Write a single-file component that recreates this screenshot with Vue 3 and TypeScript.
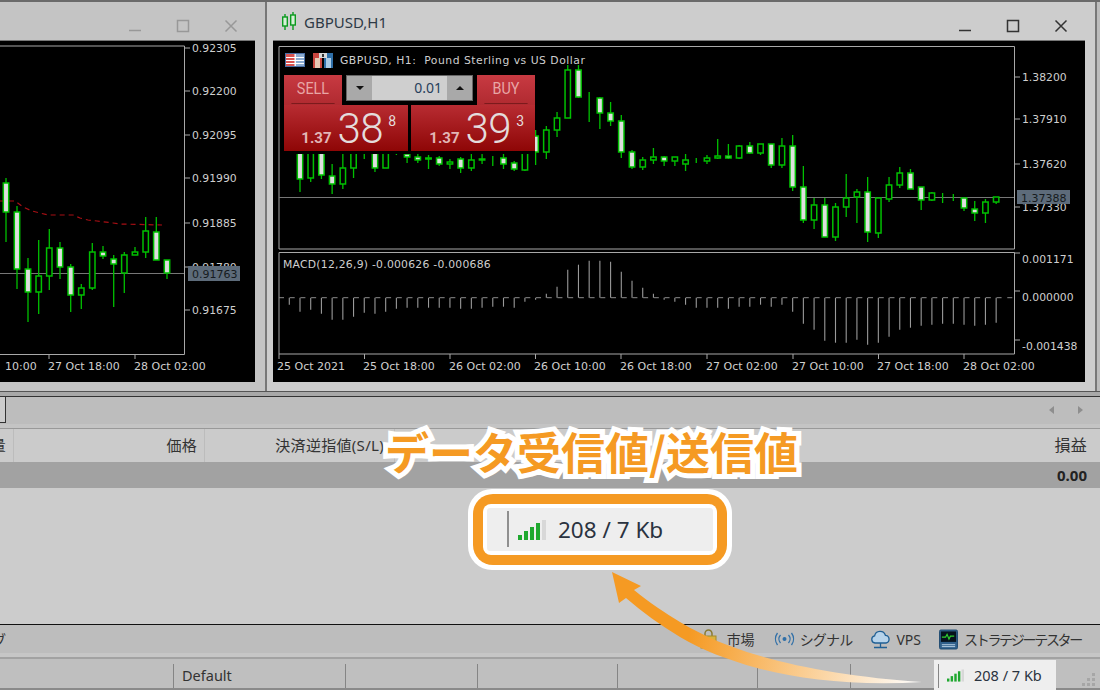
<script setup lang="ts">
// [index, wickTop, wickBottom, bodyTop, bodyBottom, filled]
type Candle = [number, number, number, number, number, number]

const STEP = 10.71

const gbpCandles: Candle[] = [
  [0, 140, 192, 140, 179, 1], [1, 140, 182, 140, 178, 0], [2, 140, 179, 140, 175, 1], [3, 164, 194, 176, 184, 1],
  [4, 154, 189, 168, 184, 0], [5, 140, 178, 140, 168, 0], [6, 154, 159, 158, 158, 0], [7, 140, 172, 140, 168, 1],
  [8, 140, 168, 140, 168, 0], [9, 154, 155, 155, 155, 0], [10, 150, 163, 154, 157, 1], [11, 154, 163, 157, 160, 1],
  [12, 155, 169, 158, 159, 0], [13, 156, 166, 158, 164, 1], [14, 159, 169, 162, 164, 0], [15, 157, 173, 159, 168, 1],
  [16, 154, 171, 160, 168, 0], [17, 154, 164, 159, 160, 0], [18, 156, 166, 158, 158, 0], [19, 150, 169, 158, 164, 1],
  [20, 161, 171, 163, 169, 1], [21, 150, 171, 150, 170, 0], [22, 130, 165, 136, 152, 1], [23, 126, 159, 130, 152, 0],
  [24, 112, 137, 118, 130, 0], [25, 65, 118, 70, 118, 0], [26, 65, 98, 70, 97, 1], [27, 92, 122, 97, 97, 0],
  [28, 97, 129, 98, 113, 1], [29, 102, 126, 113, 121, 1], [30, 115, 158, 121, 152, 1], [31, 150, 169, 152, 167, 1],
  [32, 157, 170, 160, 167, 0], [33, 148, 164, 157, 160, 0], [34, 156, 166, 157, 161, 1], [35, 157, 166, 157, 161, 0],
  [36, 154, 171, 160, 164, 0], [37, 158, 163, 161, 161, 0], [38, 155, 164, 158, 161, 0], [39, 139, 159, 156, 158, 0],
  [40, 144, 159, 156, 158, 1], [41, 145, 159, 146, 158, 0], [42, 142, 154, 146, 153, 1], [43, 144, 155, 144, 153, 0],
  [44, 144, 168, 144, 165, 1], [45, 138, 168, 146, 165, 0], [46, 135, 191, 146, 187, 1], [47, 166, 223, 187, 220, 1],
  [48, 198, 229, 205, 220, 0], [49, 198, 237, 205, 237, 1], [50, 203, 241, 207, 237, 0], [51, 174, 217, 198, 207, 0],
  [52, 189, 223, 192, 197, 0], [53, 177, 242, 192, 232, 1], [54, 198, 238, 198, 233, 0], [55, 177, 202, 185, 199, 0],
  [56, 167, 188, 173, 185, 0], [57, 169, 189, 173, 189, 1], [58, 187, 210, 187, 200, 1], [59, 192, 201, 193, 200, 0],
  [60, 193, 203, 197, 197, 0], [61, 194, 201, 198, 198, 0], [62, 198, 211, 198, 208, 1], [63, 201, 221, 209, 213, 1],
  [64, 199, 223, 202, 213, 0], [65, 197, 204, 197, 202, 0],
]

// left chart: [x, wickTop, wickBottom, bodyTop, bodyBottom, filled]
const leftCandles: Candle[] = [
  [6, 178, 242, 183, 212, 1], [17, 206, 289, 212, 269, 1], [28, 258, 322, 269, 292, 1], [38.7, 240, 314, 276, 292, 0],
  [49.3, 229, 290, 248, 276, 0], [60, 242, 279, 248, 267, 1], [70.7, 264, 312, 267, 295, 1], [81.3, 284, 309, 288, 295, 0],
  [92.3, 243, 290, 252, 288, 0], [103, 246, 259, 252, 256, 1], [113.7, 255, 307, 259, 264, 1], [124.3, 252, 293, 255, 273, 0],
  [135, 247, 255, 252, 255, 0], [145.7, 217, 258, 231, 252, 0], [156.3, 217, 260, 232, 260, 1], [167, 260, 279, 260, 273, 1],
]

// bar length from the zero line, starting at index -1 (negative goes up)
const macd = [
  7, 14, 12, 16, 22, 22, 19, 15, 16, 14, 11, 10, 10, 10, 10, 10, 11, 11, 10, 9, 9, 10, 4, 2, -4, -11, -28, -33, -37, -37, -36,
  -26, -17, -10, -4, 2, 4, 7, 10, 10, 10, 11, 9, 9, 7, 9, 7, 14, 26, 32, 43, 45, 45, 42, 47, 45, 39, 32, 30, 28, 27, 26, 26,
  27, 28, 27, 25,
]

const candleX = (i: number) => 301 + STEP * i
const macdBars = macd.map((d, i) => ({ x: candleX(i - 1), d }))

const redLine = '0,201 15,201 23,207 32,211 40,213 48,215 73,215 80,218 88,220 97,221 113,223 120,224 162,225'

const leftPrices = [
  { y: 48, t: '0.92305' }, { y: 91, t: '0.92200' }, { y: 135, t: '0.92095' }, { y: 178, t: '0.91990' },
  { y: 223, t: '0.91885' }, { y: 267, t: '0.91780' }, { y: 310, t: '0.91675' },
]
const gbpPrices = [
  { y: 77, t: '1.38200' }, { y: 119, t: '1.37910' }, { y: 164, t: '1.37620' }, { y: 207, t: '1.37330' },
]
const macdPrices = [
  { y: 259, t: '0.001171' }, { y: 297, t: '0.000000' }, { y: 346, t: '-0.001438' },
]
const gbpTimes = [
  { x: 278, tick: 280, t: '25 Oct 2021' }, { x: 364, tick: 365.5, t: '25 Oct 18:00' }, { x: 450, tick: 451, t: '26 Oct 02:00' },
  { x: 535, tick: 536.5, t: '26 Oct 10:00' }, { x: 621, tick: 622, t: '26 Oct 18:00' }, { x: 707, tick: 708, t: '27 Oct 02:00' },
  { x: 793, tick: 794, t: '27 Oct 10:00' }, { x: 878, tick: 879.5, t: '27 Oct 18:00' }, { x: 964, tick: 965, t: '28 Oct 02:00' },
]

const signalBars = [
  { x: 0, h: 5, on: true }, { x: 6, h: 9, on: true }, { x: 12, h: 13, on: true }, { x: 18, h: 17, on: true }, { x: 24, h: 20, on: false },
]
const statusCells = [173, 172, 132, 140, 140, 93, 84]
const gripDots = [[10, 0], [5, 5], [10, 5], [0, 10], [5, 10], [10, 10]]
</script>

<template>
  <div class="screen">
    <div class="desktop">
      <section class="win win-left">
        <header class="titlebar">
          <div class="win-btns">
            <svg width="14" height="14" viewBox="0 0 14 14"><path d="M1 11.5h12" /></svg>
            <svg width="14" height="14" viewBox="0 0 14 14"><path d="M1.5 1.5h11v11h-11z" /></svg>
            <svg width="14" height="14" viewBox="0 0 14 14"><path d="M1.5 1.5l11 11M12.5 1.5l-11 11" /></svg>
          </div>
        </header>
        <div class="pane">
          <svg width="255" height="341" viewBox="0 41 255 341" class="chart">
            <path class="axis" d="M0 46H184.5V354.5H0" />
            <g v-for="p in leftPrices" :key="p.t">
              <path class="axis" :d="`M184 ${p.y}h6`" />
              <text class="lbl" x="192" :y="p.y + 4">{{ p.t }}</text>
            </g>
            <polyline class="red" :points="redLine" />
            <path class="cur" d="M0 273.5H184" />
            <g v-for="c in leftCandles" :key="c[0]">
              <path class="wick" :d="`M${c[0]} ${c[1]}V${c[2]}`" />
              <rect class="body" :class="{ filled: c[5] }" :x="c[0] - 2.7" :y="c[3]" width="5.4" :height="c[4] - c[3]" />
            </g>
            <rect x="188" y="266" width="52" height="15" class="cur-box" />
            <text class="cur-txt" x="192" y="278">0.91763</text>
            <path class="axis" d="M49 354v5M135 354v5" />
            <text class="lbl time" x="5" y="370">10:00</text>
            <text class="lbl time" x="48" y="370">27 Oct 18:00</text>
            <text class="lbl time" x="134" y="370">28 Oct 02:00</text>
          </svg>
        </div>
      </section>

      <section class="win win-right">
        <header class="titlebar">
          <svg class="app-icon" width="16" height="20" viewBox="0 0 16 20">
            <path d="M4 2v16M12 0v18" />
            <rect x="1.7" y="5" width="4.6" height="9" />
            <rect x="9.7" y="3" width="4.6" height="10" />
          </svg>
          <span class="win-title">GBPUSD,H1</span>
          <div class="win-btns">
            <svg width="14" height="14" viewBox="0 0 14 14"><path d="M1 11.5h12" /></svg>
            <svg width="14" height="14" viewBox="0 0 14 14"><path d="M1.5 1.5h11v11h-11z" /></svg>
            <svg width="14" height="14" viewBox="0 0 14 14"><path d="M1.5 1.5l11 11M12.5 1.5l-11 11" /></svg>
          </div>
        </header>
        <div class="pane">
          <svg width="812" height="341" viewBox="274 41 812 341" class="chart">
            <path class="axis" d="M280 46.5H1015.5V249H280zM280 252.5H1015.5V354H280z" />
            <g v-for="p in gbpPrices" :key="p.t">
              <path class="axis" :d="`M1015 ${p.y}h6`" />
              <text class="lbl" x="1023" :y="p.y + 4">{{ p.t }}</text>
            </g>
            <g v-for="p in macdPrices" :key="p.t">
              <path class="axis" :d="`M1015 ${p.y - 6}h6`" />
              <text class="lbl" x="1023" :y="p.y + 4">{{ p.t }}</text>
            </g>
            <path class="cur" d="M280 197.5H1015" />
            <g v-for="c in gbpCandles" :key="c[0]">
              <path class="wick" :d="`M${candleX(c[0])} ${c[1]}V${c[2]}`" />
              <rect class="body" :class="{ filled: c[5] }" :x="candleX(c[0]) - 2.7" :y="c[3]" width="5.4" :height="c[4] - c[3]" />
            </g>
            <rect x="1018" y="190" width="53" height="14" class="cur-box" />
            <text class="cur-txt" x="1022" y="202">1.37388</text>

            <text class="lbl sym" x="341" y="64">GBPUSD, H1:&#160;&#160;Pound Sterling vs US Dollar</text>
            <text class="lbl macd-lbl" x="284" y="268">MACD(12,26,9) -0.000626 -0.000686</text>
            <path class="zero" d="M280 297.7H1015" />
            <path v-for="b in macdBars" :key="b.x" class="macd" :d="`M${b.x} 297.7v${b.d}`" />
            <g v-for="t in gbpTimes" :key="t.t">
              <path class="axis" :d="`M${t.tick} 354v5`" />
              <text class="lbl time" :x="t.x" y="370">{{ t.t }}</text>
            </g>
          </svg>

          <div class="chart-icons">
            <svg width="20" height="14" viewBox="0 0 20 14">
              <rect x=".5" y=".5" width="19" height="13" fill="#e8e8f0" stroke="#4a6fa5" />
              <path d="M1 1h9v12H1z" fill="#d9534f" />
              <path d="M11 1h8v12h-8z" fill="#3f78b5" opacity=".55" />
              <path d="M1 4.500h18M1 7.500h18M1 10.500h18M10 1v12" stroke="#fff" fill="none" />
            </svg>
            <svg width="20" height="15" viewBox="0 0 20 15">
              <path d="M0 0h9v15H0z" fill="#c9463f" />
              <path d="M2 5h5v10H2z" fill="#e6c8b4" />
              <path d="M11 0h9v15h-9z" fill="#2f6fa8" />
              <path d="M13 5h5v10h-5z" fill="#a9cbe6" />
              <path d="M6 0h8v5H6z" fill="#d8d8d8" />
              <path d="M9 1h2v3H9z" fill="#333" />
            </svg>
          </div>

          <div class="trade">
            <div class="trade-top">
              <div class="side-btn"><span>SELL</span></div>
              <div class="vol">
                <div class="vol-btn"><i class="tri down" /></div>
                <div class="vol-val">0.01</div>
                <div class="vol-btn"><i class="tri up" /></div>
              </div>
              <div class="side-btn"><span>BUY</span></div>
            </div>
            <div class="trade-prices">
              <div class="price sell-price">
                <span class="p-small">1.37</span><span class="p-big">38</span><span class="p-sup">8</span>
              </div>
              <div class="price">
                <span class="p-small">1.37</span><span class="p-big">39</span><span class="p-sup">3</span>
              </div>
            </div>
          </div>
        </div>
      </section>
    </div>

    <div class="terminal">
      <div class="tabs-row">
        <div class="tab-stub" />
        <div class="tab-arrows">
          <i class="arr arr-l" />
          <i class="arr arr-r" />
        </div>
      </div>
      <div class="band" />
      <div class="thead">
        <div class="th th-a"><span>数量</span></div>
        <div class="th th-b">価格</div>
        <div class="th th-c">決済逆指値(S/L)</div>
        <div class="th th-d">損益</div>
      </div>
      <div class="total-row">0.00</div>
      <div class="t-body" />
      <div class="toolbar">
        <span class="tb-cut">ブ</span>
        <div class="tb-items">
          <span class="tb-item">
            <svg width="17" height="20" viewBox="0 0 17 20">
              <path d="M5 8V4.500a3.500 3.500 0 017 0V8" fill="none" stroke="#8a7a30" stroke-width="1.500" />
              <rect x="1" y="7" width="15" height="12" fill="#d9b23c" stroke="#a68a2a" />
            </svg>
            市場
          </span>
          <span class="tb-item tb-signal">
            <svg width="21" height="14" viewBox="0 0 21 14" fill="none" stroke="#2f6fa8" stroke-width="1.3">
              <circle cx="10.5" cy="7" r="2" fill="#2f6fa8" stroke="none" />
              <path d="M6.5 3a6 6 0 000 8M14.5 3a6 6 0 010 8M3.5 1a10 10 0 000 12M17.5 1a10 10 0 010 12" />
            </svg>
            シグナル
          </span>
          <span class="tb-item tb-vps">
            <svg width="21" height="21" viewBox="0 0 21 21" fill="#b7d3ea" stroke="#1f5f94" stroke-width="1.3">
              <path d="M5 14a3.6 3.6 0 01-.4-7.1 5.6 5.6 0 0110.8-.6A3.9 3.9 0 0116 14z" />
              <path d="M10.5 14v4M4 18.500h13" fill="none" />
            </svg>
            VPS
          </span>
          <span class="tb-item tb-tester">
            <svg width="19" height="21" viewBox="0 0 20 21">
              <rect x=".5" y=".5" width="19" height="20" rx="1.500" fill="#2f5f8a" stroke="#1f4a70" />
              <rect x="2" y="2" width="16" height="11" fill="#06121c" />
              <path d="M3 8h4l1.500-3 2 5 1.500-3h4" fill="none" stroke="#2fd02f" stroke-width="1.200" />
              <path d="M3 16h14M3 18h14" stroke="#bcd3e6" />
            </svg>
            ストラテジーテスター
          </span>
        </div>
      </div>
      <div class="light-band" />
      <div class="status">
        <div v-for="(w, i) in statusCells" :key="i" class="cell" :style="{ width: w + 'px' }">
          <div class="cell-in" :class="{ 'no-sep': i === 0 }">
            <span v-if="i === 1">Default</span>
          </div>
        </div>
        <div class="cell cell-hl">
          <div class="cell-in">
            <svg class="sig" width="17" height="13" viewBox="0 0 28 20">
              <rect v-for="b in signalBars" :key="b.x" :x="b.x" :y="20 - b.h" width="4" :height="b.h" :fill="b.on ? '#1fa82f' : '#d8d8d8'" />
            </svg>
            <span>208 / 7 Kb</span>
          </div>
        </div>
        <div class="cell cell-end">
          <svg width="15" height="15" viewBox="0 0 15 15">
            <rect v-for="d in gripDots" :key="d.join()" :x="d[0]" :y="d[1]" width="3" height="3" fill="#a6a6a6" />
          </svg>
        </div>
      </div>
    </div>

    <!-- annotation layer -->
    <div class="big-label">データ受信値/送信値</div>
    <div class="callout">
      <div class="callout-orange">
        <div class="callout-white">
          <div class="callout-in">
            <svg class="callout-sig" width="28" height="20" viewBox="0 0 28 20">
              <rect v-for="b in signalBars" :key="b.x" :x="b.x" :y="20 - b.h" width="4" :height="b.h" :fill="b.on ? '#1fa82f' : '#d8d8d8'" />
            </svg>
            <span>208 / 7 Kb</span>
          </div>
        </div>
      </div>
    </div>
    <svg class="arrow" width="1100" height="690" viewBox="0 0 1100 690">
      <defs>
        <linearGradient id="arrow-fade" gradientUnits="userSpaceOnUse" x1="690" y1="630" x2="922" y2="682">
          <stop offset="0" stop-color="#f59a23" />
          <stop offset="1" stop-color="#ffffff" />
        </linearGradient>
      </defs>
      <path
        fill="url(#arrow-fade)"
        d="M612 572L641 586 634 590C650 603 665 613 680 622 705 637 730 647 757 655 800 668 860 678 922 682 860 686 800 680 757 668 728 660 702 650 680 637 660 625 642 612 626 598L619 603z"
      />
    </svg>
  </div>
</template>

<style>
html, body { margin: 0; background: #ccc; }
</style>

<style scoped>
.screen {
  position: relative;
  width: 1100px;
  height: 690px;
  overflow: hidden;
  display: flex;
  flex-direction: column;
  background: #cccccc;
  font-family: "Noto Sans", "Noto Sans CJK JP", sans-serif;
  color: #333;
}

.desktop {
  display: flex;
  height: 392px;
  flex: none;
  box-sizing: border-box;
  border-top: 2px solid #6a6a6a;
  border-bottom: 1px solid #555;
  background: #bcbcbc;
}

.win { display: flex; flex-direction: column; box-sizing: border-box; }

.win-left {
  width: 267px;
  background: #c4c4c4;
  border-right: 2px solid #777;
}

.win-right {
  width: 830px;
  background: #cdcdcd;
  border-right: 2px solid #777;
  padding-left: 6px;
}

.titlebar {
  height: 39px;
  flex: none;
  display: flex;
  align-items: center;
  position: relative;
}

.app-icon { margin: 0 7px 0 8px; fill: none; stroke: #0a9a1e; stroke-width: 1.4; }
.app-icon rect { fill: #d8f0d8; }

.win-title { font-size: 15px; color: #2e3a46; }

.win-btns {
  display: flex;
  gap: 34px;
  margin-left: auto;
  margin-top: 8px;
  padding-right: 27px;
  fill: none;
}

.win-btns svg { stroke: #333; stroke-width: 1.5; }
.win-left .win-btns svg { stroke: #989898; }

.win-left .pane { width: 255px; }
.win-right .pane { width: 812px; }

.pane {
  position: relative;
  height: 341px;
  flex: none;
  background: #000;
  box-shadow: 0 -1px 0 #777;
}

.chart { display: block; font-family: "DejaVu Sans", sans-serif; }

.lbl { fill: #cfcfcf; font-size: 10.8px; }
.time { font-size: 11px; }
.sym { letter-spacing: .5px; }
.macd-lbl { letter-spacing: .25px; }
.axis { fill: none; stroke: #a8a8a8; stroke-width: 1; }
.cur { stroke: #777; stroke-width: 1; }
.red { fill: none; stroke: #a80f14; stroke-width: 1.2; stroke-dasharray: 5 4; }
.wick { stroke: #00c000; stroke-width: 1.3; }
.body { fill: #000; stroke: #00c000; stroke-width: 1.5; }
.body.filled { fill: #dedede; }
.cur-box { fill: #5d6b7a; }
.cur-txt { fill: #161b20; font-size: 11px; }
.zero { stroke: #8a8a8a; stroke-width: 1; stroke-dasharray: 5 5.71; }
.macd { stroke: #9a9a9a; stroke-width: 1.1; }

.chart-icons {
  position: absolute;
  left: 12px;
  top: 12px;
  display: flex;
  gap: 8px;
}

.trade {
  position: absolute;
  left: 11px;
  top: 34px;
  width: 251px;
  padding-bottom: 3px;
  background: #000;
}

.trade-top {
  display: flex;
  justify-content: space-between;
  align-items: flex-start;
  height: 30px;
}

.side-btn {
  width: 58px;
  height: 30px;
  box-sizing: border-box;
  padding: 0 5px;
  background: linear-gradient(#c83a42, #b02a30);
}

.side-btn span {
  display: block;
  height: 28px;
  line-height: 27px;
  text-align: center;
  border-bottom: 1px solid #7c1a1c;
  color: #e8a6a6;
  font-size: 16px;
  font-family: "Roboto", sans-serif;
  transform: scaleX(.9);
}

.vol {
  width: 127px;
  height: 26px;
  display: flex;
  box-sizing: border-box;
  border: 1px solid #666;
  background: #cfcfcf;
}

.vol-btn {
  width: 25px;
  flex: none;
  background: #a9a9a9;
  display: flex;
  align-items: center;
  justify-content: center;
}

.vol-val {
  flex: 1;
  text-align: right;
  padding-right: 5px;
  line-height: 24px;
  font-size: 14px;
  color: #27405c;
}

.tri { width: 0; height: 0; border-left: 4px solid transparent; border-right: 4px solid transparent; }
.tri.down { border-top: 4px solid #111; }
.tri.up { border-bottom: 4px solid #111; }

.trade-prices { display: flex; justify-content: space-between; }

.price {
  width: 124px;
  height: 46px;
  box-sizing: border-box;
  padding: 0 11px 0 0;
  display: flex;
  justify-content: flex-end;
  align-items: flex-end;
  background: linear-gradient(#b82c32, #8e0606);
  color: #e4dcdc;
  font-family: "Roboto", sans-serif;
}

.sell-price { padding-right: 12px; }

.p-small { font-size: 15px; font-weight: 700; color: #e2b6b6; line-height: 18px; margin-right: 6px; margin-bottom: 4px; }
.p-big { font-size: 42px; font-weight: 300; line-height: 44px; letter-spacing: -.5px; }
.p-sup { font-size: 14px; align-self: flex-start; margin: 9px 0 0 5px; line-height: 14px; }

.terminal {
  flex: 1;
  display: flex;
  flex-direction: column;
  min-height: 0;
}

.tabs-row {
  margin-top: 4px;
  height: 28px;
  flex: none;
  box-sizing: border-box;
  border-top: 1px solid #333;
  background: #bdbdbd;
  display: flex;
  justify-content: space-between;
  align-items: flex-start;
  box-shadow: 0 -4px 0 #a8a8a8;
}

.tab-stub {
  width: 5px;
  height: 25px;
  background: #ccc;
  border-right: 1px solid #333;
  border-bottom: 1px solid #333;
}

.tab-arrows {
  display: flex;
  gap: 24px;
  padding: 9px 17px 0 0;
}

.arr { width: 0; height: 0; border-top: 4px solid transparent; border-bottom: 4px solid transparent; }
.arr-l { border-right: 5px solid #8e8e8e; }
.arr-r { border-left: 5px solid #8e8e8e; }

.band { height: 5px; flex: none; background: #c4c4c4; border-bottom: 1px solid #999; box-sizing: border-box; }

.thead {
  height: 33px;
  flex: none;
  display: flex;
  background: #cbcbcb;
  font-size: 15px;
  line-height: 33px;
  letter-spacing: .3px;
  color: #333;
}

.th {
  flex: none;
  box-sizing: border-box;
  text-align: right;
  white-space: nowrap;
  border-right: 1px solid #bcbcbc;
  padding-right: 7px;
}

.th-a { width: 14px; display: flex; justify-content: flex-end; overflow: hidden; padding-right: 7px; }
.th-a span { flex: none; }
.th-b { width: 191px; }
.th-c { width: 190px; padding-right: 10px; }
.th-d { flex: 1; border-right: 0; padding-right: 13px; font-size: 16px; }

.total-row {
  height: 26px;
  flex: none;
  background: #a2a2a2;
  text-align: right;
  padding-right: 13px;
  font-size: 15px;
  line-height: 27px;
  font-weight: 700;
  color: #222;
}

.t-body { flex: 1; min-height: 0; background: #cccccc; }

.toolbar {
  height: 29px;
  flex: none;
  box-sizing: border-box;
  border-top: 1.5px solid #111;
  background: #bdbdbd;
  display: flex;
  align-items: center;
  justify-content: space-between;
  font-size: 14px;
  color: #333;
}

.tb-cut { margin-left: -8px; }

.tb-items { display: flex; align-items: center; padding-right: 19px; }

.tb-item { display: flex; align-items: center; gap: 10px; white-space: nowrap; }
.tb-signal { margin-left: 19px; gap: 5px; letter-spacing: -.8px; }
.tb-vps { margin-left: 18px; gap: 5px; }
.tb-tester { margin-left: 18px; gap: 6px; letter-spacing: -2.3px; }

.light-band { height: 4px; flex: none; background: #c6c6c6; border-bottom: 2px solid #a2a2a2; box-sizing: content-box; }

.status {
  height: 31px;
  flex: none;
  display: flex;
  background: #bfbfbf;
  font-size: 14.5px;
  color: #333;
}

.cell {
  flex: none;
  box-sizing: border-box;
  padding-top: 5px;
  border-bottom: 2px solid #8a8a8a;
}

.cell-in {
  height: 100%;
  box-sizing: border-box;
  border-left: 1.5px solid #858585;
  padding-left: 8px;
  padding-bottom: 2px;
  display: flex;
  align-items: center;
  white-space: nowrap;
}

.cell-in.no-sep { border-left: 0; }

.cell-hl {
  width: 122px;
  background: #eeeeee;
  border-bottom: 0;
  padding: 4px 0 2px 4px;
  margin-top: 1px;
  color: #2a3340;
}

.sig { margin-right: 10px; }

.cell-end {
  flex: 1;
  display: flex;
  justify-content: flex-end;
  align-items: flex-end;
  padding-right: 3px;
}

.big-label {
  position: absolute;
  left: 385px;
  top: 419px;
  font-family: "Noto Sans CJK JP", sans-serif;
  font-size: 44px;
  font-weight: 700;
  line-height: 64px;
  white-space: nowrap;
  color: #f59a23;
  -webkit-text-stroke: 10px #fff;
  paint-order: stroke fill;
}

.callout {
  position: absolute;
  left: 468px;
  top: 489px;
  width: 264px;
  height: 81px;
  box-sizing: border-box;
  padding: 5px;
  background: #fff;
  border-radius: 24px;
}

.callout-orange {
  height: 100%;
  box-sizing: border-box;
  padding: 10px;
  background: #f59a23;
  border-radius: 20px;
}

.callout-white {
  height: 100%;
  box-sizing: border-box;
  padding: 4px;
  background: #fff;
  border-radius: 8px;
}

.callout-in {
  height: 100%;
  box-sizing: border-box;
  padding-left: 20px;
  background: #eeeeee;
  border-radius: 3px;
  display: flex;
  align-items: center;
  position: relative;
  font-size: 22.5px;
  color: #2a3340;
}

.callout-in::before {
  content: "";
  position: absolute;
  left: 20px;
  top: 3px;
  bottom: 4px;
  border-left: 2px solid #8f8f8f;
}

.callout-sig { margin: 0 12px 0 11px; }

.arrow { position: absolute; left: 0; top: 0; pointer-events: none; }
</style>
